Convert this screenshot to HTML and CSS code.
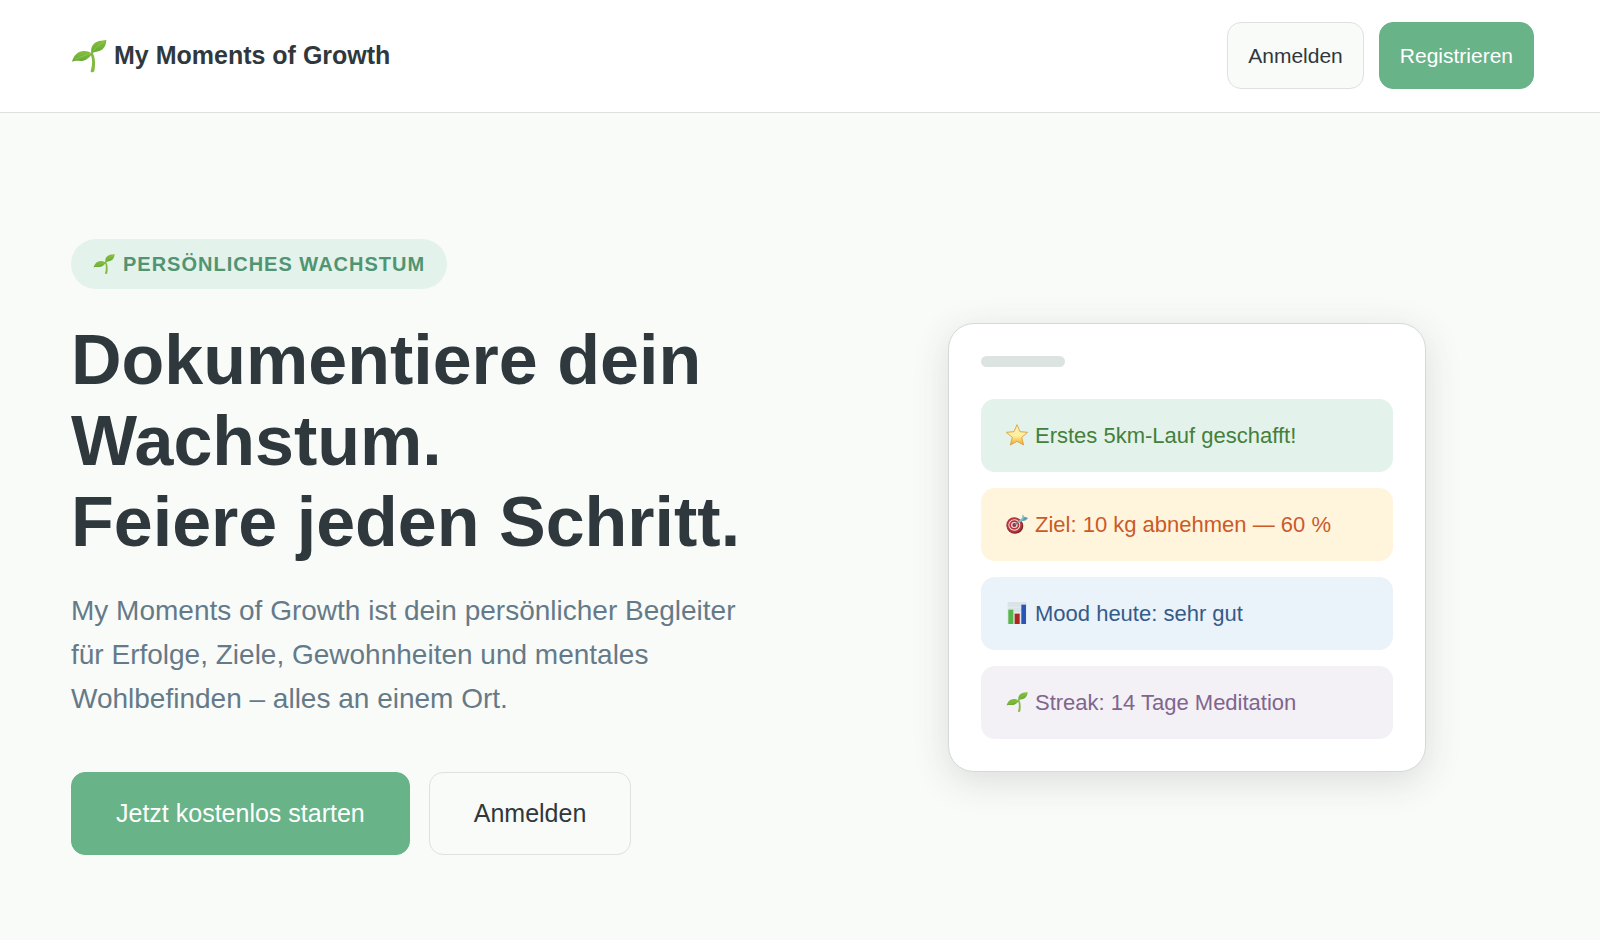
FILE: index.html
```html
<!DOCTYPE html>
<html lang="de">
<head>
  <meta charset="UTF-8" />
  <meta name="viewport" content="width=device-width, initial-scale=1.0" />
  <title>My Moments of Growth</title>
  <link rel="stylesheet" href="styles.css">
</head>
<body>

  <!-- shared sprout icon -->
  <svg class="defs" aria-hidden="true">
    <defs>
      <linearGradient id="leaf" x1="0" y1="0" x2="0" y2="1">
        <stop offset="0" stop-color="#86bf40" />
        <stop offset="1" stop-color="#66a832" />
      </linearGradient>
      <symbol id="sprout" viewBox="0 0 108 108">
        <path d="M57 46C65 60 65 80 59 99C58 104 68 104 70 99C74 78 73 58 64 42Z" fill="#84b944" />
        <path d="M3 71C8 52 22 38 40 39C50 39 59 43 63 48C54 61 43 69 29 69C18 68 10 68 3 71Z" fill="url(#leaf)" />
        <path d="M61 46C58 26 68 13 84 9C93 7 99 8 106 5C106 20 100 33 87 38C76 42 67 42 61 46Z" fill="url(#leaf)" />
        <path d="M12 64C28 59 45 49 61 46M63 44C72 29 84 20 98 12" fill="none" stroke="#98cb54" stroke-width="2" />
      </symbol>
    </defs>
  </svg>

  <header class="topbar">
    <div class="logo">
      <svg class="logo-icon" aria-hidden="true"><use href="#sprout" /></svg>
      <span>My Moments of Growth</span>
    </div>
    <nav class="topbar-actions">
      <button class="btn btn-secondary">Anmelden</button>
      <button class="btn btn-primary">Registrieren</button>
    </nav>
  </header>

  <main class="hero">
    <section class="hero-text">
      <div class="badge">
        <svg class="icon" aria-hidden="true"><use href="#sprout" /></svg>
        <span>PERSÖNLICHES WACHSTUM</span>
      </div>
      <h1>Dokumentiere dein Wachstum.<br>Feiere jeden Schritt.</h1>
      <p class="sub">My Moments of Growth ist dein persönlicher Begleiter für Erfolge, Ziele, Gewohnheiten und mentales Wohlbefinden – alles an einem Ort.</p>
      <div class="hero-actions">
        <button class="btn btn-large btn-primary">Jetzt kostenlos starten</button>
        <button class="btn btn-large btn-secondary">Anmelden</button>
      </div>
    </section>

    <section class="hero-visual">
      <div class="card">
        <div class="card-bar"></div>
        <ul class="card-list">
          <li class="item item-green">
            <svg class="icon" viewBox="0 0 66 66" aria-hidden="true">
              <defs>
                <linearGradient id="gold" x1="0" y1="0" x2="0" y2="1">
                  <stop offset="0" stop-color="#ffefaa" />
                  <stop offset="0.55" stop-color="#fff0a0" />
                  <stop offset="1" stop-color="#f2a51a" />
                </linearGradient>
              </defs>
              <path d="M33 2L42 23L65 25L47 40L53 63L33 52L13 63L19 40L1 25L24 23Z" fill="url(#gold)" stroke="#dca650" stroke-width="3" stroke-linejoin="round" />
            </svg>
            <span>Erstes 5km-Lauf geschafft!</span>
          </li>
          <li class="item item-yellow">
            <svg class="icon" viewBox="0 0 66 66" aria-hidden="true">
              <ellipse cx="27" cy="39" rx="25" ry="23" fill="#7d2228" />
              <ellipse cx="25" cy="36" rx="24" ry="23" fill="#b3343a" />
              <ellipse cx="25" cy="36" rx="18" ry="17" fill="#eee0df" />
              <ellipse cx="25" cy="36" rx="15" ry="14" fill="#b3343a" />
              <ellipse cx="25" cy="36" rx="10" ry="9" fill="#eee0df" />
              <circle cx="25" cy="36" r="6" fill="#a82830" />
              <path d="M26 36L50 18" stroke="#4d8795" stroke-width="4" />
              <path d="M35 27L48 15L50 4L56 12L66 15L59 22L48 24L38 31Z" fill="#7fbfca" />
              <path d="M56 12L66 15L59 22L48 24Z" fill="#5d9dad" />
            </svg>
            <span>Ziel: 10 kg abnehmen — 60 %</span>
          </li>
          <li class="item item-blue">
            <svg class="icon" viewBox="0 0 66 66" aria-hidden="true">
              <rect x="5" y="0" width="56" height="66" fill="#dbe3e9" />
              <path d="M5 16H61M5 32H61M5 48H61" stroke="#eaf0f4" stroke-width="2" />
              <rect x="7" y="23" width="15" height="43" fill="#55b64a" />
              <rect x="26" y="35" width="15" height="31" fill="#ad2620" />
              <rect x="46" y="8" width="14" height="58" fill="#2856b4" />
            </svg>
            <span>Mood heute: sehr gut</span>
          </li>
          <li class="item item-purple">
            <svg class="icon" aria-hidden="true"><use href="#sprout" /></svg>
            <span>Streak: 14 Tage Meditation</span>
          </li>
        </ul>
      </div>
    </section>
  </main>

</body>
</html>
```
FILE: styles.css
```css
:root {
  --green: #68b388;
  --green-soft: #e3f2ea;
  --bg: #f9fbf8;
  --white: #ffffff;
  --text: #2f383c;
  --muted: #657a89;
  --border: #dde2e1;
  --font: "Liberation Sans", Arial, sans-serif;
}

* {
  margin: 0;
  padding: 0;
  box-sizing: border-box;
  font-family: var(--font);
}

body {
  background: var(--bg);
  color: var(--text);
}

.defs {
  position: absolute;
  width: 0;
  height: 0;
}

.topbar {
  display: flex;
  justify-content: space-between;
  align-items: center;
  padding: 22px 66px 23px 71px;
  background: var(--white);
  border-bottom: 1px solid var(--border);
}

.logo {
  display: flex;
  align-items: center;
  gap: 7px;
  font-size: 25px;
  font-weight: bold;
}

.logo-icon {
  width: 36px;
  height: 36px;
}

.icon {
  width: 22px;
  height: 22px;
  flex-shrink: 0;
}

.topbar-actions {
  display: flex;
  gap: 15px;
}

.btn {
  padding: 21px 20px;
  font-size: 21px;
  line-height: 23px;
  border: 1px solid var(--border);
  border-radius: 14px;
  cursor: pointer;
}

.btn-large {
  padding: 26px 44px;
  font-size: 25px;
  line-height: 29px;
}

.btn-primary {
  background: var(--green);
  border-color: var(--green);
  color: var(--white);
}

.btn-secondary {
  background: var(--bg);
  color: var(--text);
}

.btn:hover {
  opacity: 0.9;
}

.hero {
  display: grid;
  grid-template-columns: 1fr 1fr;
  gap: 75px;
  align-items: center;
  padding: 126px 66px 80px 71px;
}

.badge {
  display: inline-flex;
  align-items: center;
  gap: 8px;
  padding: 13px 22px;
  margin-bottom: 31px;
  background: var(--green-soft);
  color: #519472;
  font-size: 20px;
  line-height: 24px;
  font-weight: bold;
  letter-spacing: 1px;
  border-radius: 25px;
}

h1 {
  font-size: 70px;
  line-height: 81px;
  margin-bottom: 26px;
}

.sub {
  font-size: 28px;
  line-height: 44px;
  margin-bottom: 51px;
  color: var(--muted);
}

.hero-actions {
  display: flex;
  gap: 19px;
}

.hero-visual {
  display: flex;
  justify-content: center;
}

.card {
  width: 100%;
  max-width: 478px;
  padding: 32px;
  background: var(--white);
  border: 1px solid #d5dad9;
  border-radius: 26px;
  box-shadow: 0 9px 36px rgba(47, 56, 60, 0.15);
}

.card-bar {
  width: 84px;
  height: 11px;
  margin-bottom: 32px;
  background: #dde3e1;
  border-radius: 6px;
}

.card-list {
  display: flex;
  flex-direction: column;
  gap: 16px;
  list-style: none;
}

.item {
  display: flex;
  align-items: center;
  gap: 7px;
  padding: 24px 25px;
  font-size: 22px;
  line-height: 25px;
  border-radius: 14px;
}

.item-green {
  background: var(--green-soft);
  color: #44803c;
}

.item-yellow {
  background: #fef5dc;
  color: #cc5a28;
}

.item-blue {
  background: #eaf2fa;
  color: #355b89;
}

.item-purple {
  background: #f3f0f6;
  color: #80658d;
}
```
